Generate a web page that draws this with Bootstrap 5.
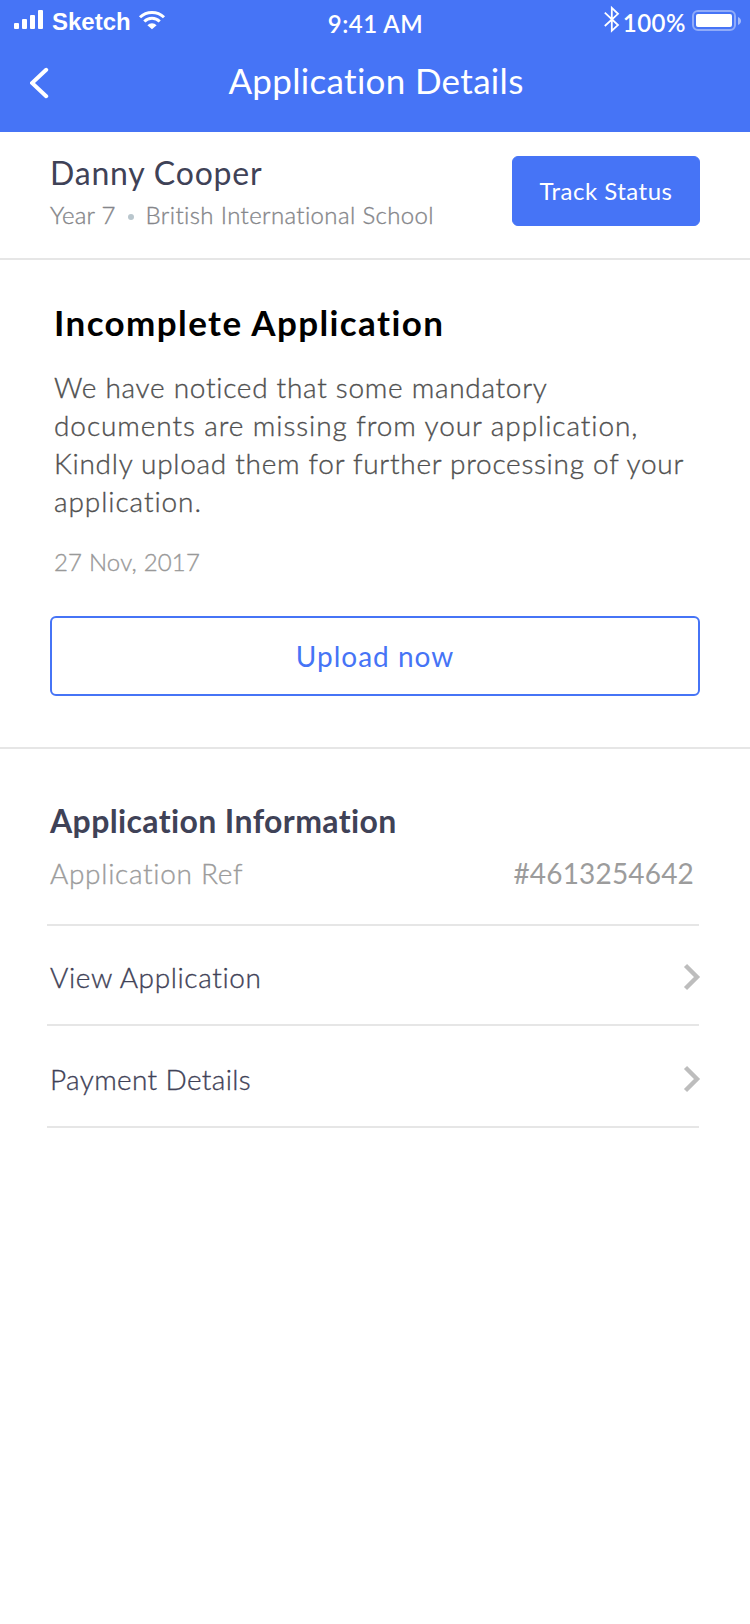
<!DOCTYPE html>
<html lang="en">
<head>
<meta charset="utf-8">
<meta name="viewport" content="width=device-width, initial-scale=1">
<title>Application Details</title>
<link href="https://cdn.jsdelivr.net/npm/bootstrap@5.3.0/dist/css/bootstrap.min.css" rel="stylesheet">
<style>
:root { --brand: #4674f6; --ink: #3f4257; --rule: #e6e6e6; }
body { font-family: Lato, "Open Sans", sans-serif; color: var(--ink); background: #fff; min-height: 1624px; }
svg { display: block; flex: none; }
.app-header { background: var(--brand); height: 132px; }
.status-bar { height: 44px; padding: 0 8px 0 14px; font-size: 24px; line-height: 24px; font-weight: 600; }
.status-side { flex: 1 1 0; }
.carrier { font: 700 24px/24px "Liberation Sans", Arial, sans-serif; letter-spacing: 0; margin: 10px 7px 0 9px; }
.clock { padding: 12px 5px 0 0; letter-spacing: .5px; }
.charge { margin: 11px 6px 0 3px; letter-spacing: .5px; }
.title-bar { height: 88px; padding: 14px 29px 0 30px; }
.title-bar h1 { font-size: 35px; line-height: 44px; font-weight: 400; letter-spacing: .32px; padding-left: 1px; }
.title-bar .side { width: 20px; }
.profile { height: 128px; border-bottom: 2px solid var(--rule); padding: 20px 50px 0; }
.profile h2 { font-size: 32px; line-height: 40px; font-weight: 400; letter-spacing: .8px; margin-bottom: 7px; padding-top: 1px; }
.thin { font-weight: 300; -webkit-text-stroke: .35px currentColor; }
.profile .meta { font-size: 24px; line-height: 30px; color: #85868a; }
.profile .meta .year { letter-spacing: .22px; }
.profile .meta .school { letter-spacing: .37px; }
.dot { width: 6px; height: 6px; border-radius: 50%; background: #b9c6cd; margin: 3px 12px 0 12px; }
.btn-track { --bs-btn-color: #fff; --bs-btn-bg: var(--brand); --bs-btn-border-color: var(--brand); width: 188px; height: 70px; margin-top: 4px; padding: 0; font-size: 24px; border-radius: 6px; letter-spacing: .49px; }
.notice { padding: 40px 50px 51px; border-bottom: 2px solid var(--rule); }
.notice-text { padding-left: 4px; }
.notice h2 { font-size: 35px; line-height: 44px; font-weight: 700; color: #000; letter-spacing: 1.4px; margin-bottom: 24px; }
.notice p { font-size: 28px; line-height: 38px; color: #505050; letter-spacing: .72px; margin-bottom: 27px; white-space: nowrap; }
.notice p .wide { letter-spacing: .92px; }
.notice time { display: block; font-size: 24px; line-height: 30px; color: #999; letter-spacing: .19px; margin-bottom: 39px; }
.btn-upload { --bs-btn-color: var(--brand); --bs-btn-border-color: var(--brand); --bs-btn-border-width: 2px; height: 80px; padding: 0; font-size: 28px; border-radius: 6px; letter-spacing: 1px; }
.info { padding: 52px 51px 0 47px; }
.info h2 { font-size: 32px; line-height: 40px; font-weight: 700; letter-spacing: .38px; margin: 0 0 0 3px; }
.info-row { border-bottom: 2px solid var(--rule); padding-left: 3px; font-size: 28px; line-height: 34px; color: var(--ink); text-decoration: none; }
.ref-row { height: 85px; padding-top: 15px; color: #9c9c9c; letter-spacing: .7px; }
.ref-row .number { font-weight: 400; letter-spacing: .18px; margin-right: 5px; }
.view-row { height: 100px; padding-top: 4px; letter-spacing: .62px; }
.pay-row { height: 102px; padding-top: 6px; letter-spacing: .36px; }
.info-row svg { margin-right: -2px; }
</style>
</head>
<body>
<header class="app-header text-white">
  <div class="status-bar d-flex align-items-start">
    <div class="status-side d-flex align-items-start">
      <svg width="29" height="30" viewBox="14 0 29 30" fill="#fff"><rect x="14" y="23" width="5" height="6" rx="1"/><rect x="22" y="19" width="5" height="10" rx="1"/><rect x="30" y="15" width="5" height="14" rx="1"/><rect x="38" y="10" width="5" height="19" rx="1"/></svg>
      <span class="carrier">Sketch</span>
      <svg width="28" height="30" viewBox="138 0 28 30"><g fill="none" stroke="#fff" stroke-width="3"><path d="M140 17.300a17.200 17.200 0 0 1 24 0"/><path d="M144.300 21.500a11 11 0 0 1 15.400 0"/></g><path fill="#fff" d="M147.400 25.200a6.600 6.600 0 0 1 9.200 0L152 29.200z"/></svg>
    </div>
    <span class="clock">9:41 AM</span>
    <div class="status-side d-flex align-items-start justify-content-end">
      <svg width="16" height="34" viewBox="604 0 16 34"><path d="M604.800 12.700 618 25l-6.200 5.800V7.900l6.200 5.900L604.800 26" fill="none" stroke="#fff" stroke-width="1.800"/></svg>
      <span class="charge">100%</span>
      <svg width="50" height="34" viewBox="692 0 50 34"><rect x="693" y="11" width="42" height="19" rx="5" fill="none" stroke="#fff" stroke-opacity=".4" stroke-width="2"/><rect x="696" y="14" width="36" height="13" rx="2" fill="#fff"/><path d="M738 17c4 1.500 4 6.500 0 8z" fill="#fff" fill-opacity=".5"/></svg>
    </div>
  </div>
  <div class="title-bar d-flex justify-content-between align-items-start">
    <a class="side" href="#" aria-label="Back"><svg width="20" height="44" viewBox="30 58 20 44"><path d="M46.200 69.800 32 83l14.200 13.200" fill="none" stroke="#fff" stroke-width="4" stroke-linecap="round"/></svg></a>
    <h1 class="mb-0">Application Details</h1>
    <span class="side"></span>
  </div>
</header>
<main>
  <section class="profile d-flex justify-content-between align-items-start">
    <div>
      <h2>Danny Cooper</h2>
      <div class="meta thin d-flex align-items-center"><span class="year">Year 7</span><span class="dot"></span><span class="school">British International School</span></div>
    </div>
    <button class="btn btn-track" type="button">Track Status</button>
  </section>
  <section class="notice">
    <div class="notice-text">
      <h2>Incomplete Application</h2>
      <p class="thin">We have noticed that some mandatory<br><span class="wide">documents are missing from your application,</span><br>Kindly upload them for further processing of your<br><span class="wide">application.</span></p>
      <time class="thin" datetime="2017-11-27">27 Nov, 2017</time>
    </div>
    <button class="btn btn-upload w-100" type="button">Upload now</button>
  </section>
  <section class="info">
    <h2>Application Information</h2>
    <div class="info-row ref-row d-flex justify-content-between"><span class="thin">Application Ref</span><span class="number">#4613254642</span></div>
    <a href="#" class="info-row view-row d-flex justify-content-between align-items-center"><span class="thin">View Application</span><svg width="18" height="28" viewBox="0 0 18 28"><path d="M2.500 2.500 14 14 2.500 25.500" fill="none" stroke="#bdbdbd" stroke-width="4.400"/></svg></a>
    <a href="#" class="info-row pay-row d-flex justify-content-between align-items-center"><span class="thin">Payment Details</span><svg width="18" height="28" viewBox="0 0 18 28"><path d="M2.500 2.500 14 14 2.500 25.500" fill="none" stroke="#bdbdbd" stroke-width="4.400"/></svg></a>
  </section>
</main>
<script src="https://cdn.jsdelivr.net/npm/bootstrap@5.3.0/dist/js/bootstrap.bundle.min.js"></script>
</body>
</html>
